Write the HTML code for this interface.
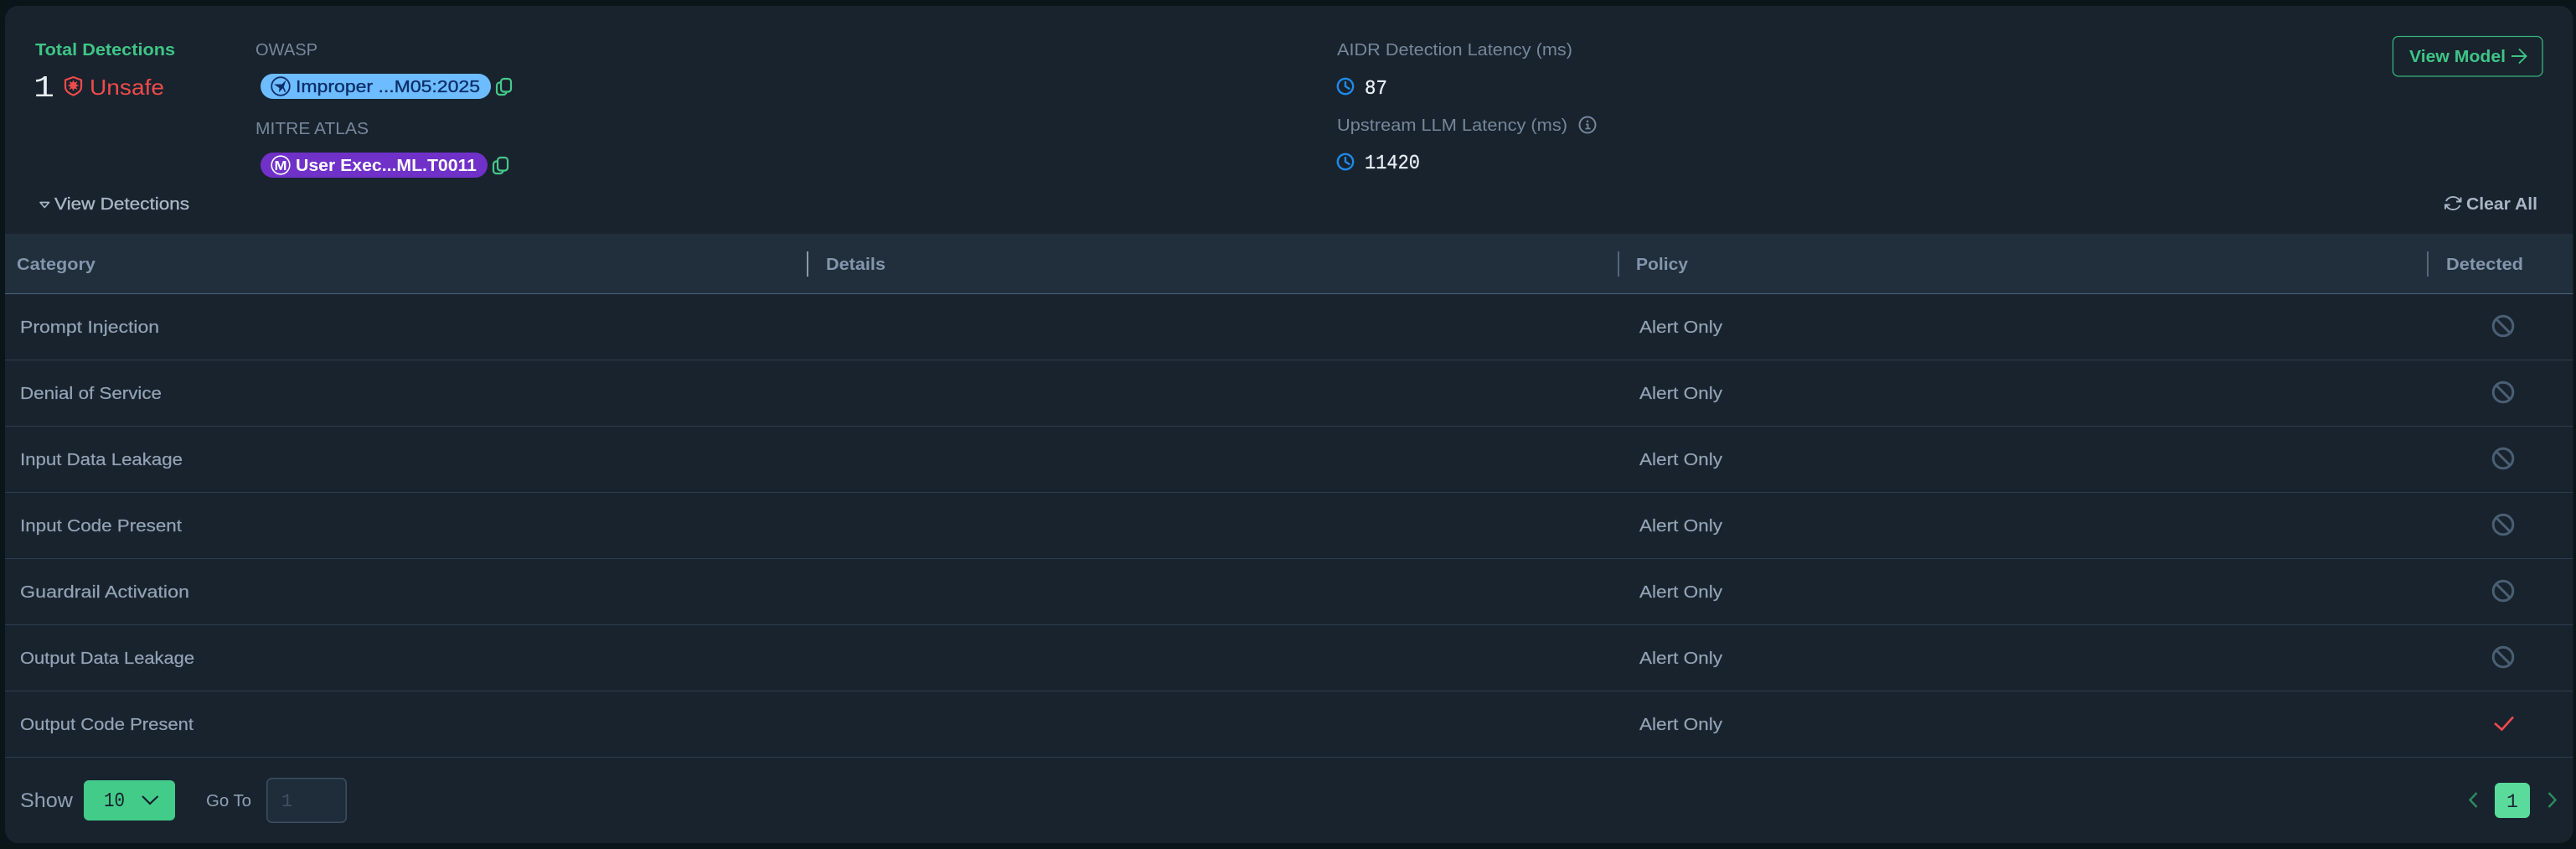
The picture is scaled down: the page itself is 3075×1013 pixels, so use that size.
<!DOCTYPE html>
<html lang="en"><head><meta charset="utf-8"><title>Detections</title>
<style>
html,body{margin:0;padding:0;width:3075px;height:1013px;overflow:hidden;background:#0a1519}
svg{display:block}
text{font-family:"Liberation Sans",sans-serif;font-size:20px}
.m{font-family:"Liberation Mono",monospace}
.b{font-weight:700}
.lab{fill:#76879a}
.row{fill:#93a3b5;stroke:#93a3b5;stroke-width:.2px}
.hd{fill:#8296ac;font-weight:700}
.pol{fill:#93a3b5;stroke:#93a3b5;stroke-width:.2px}
</style></head><body>
<svg width="3075" height="1013" viewBox="0 0 3075 1013" xmlns="http://www.w3.org/2000/svg">
<defs>
<g id="ban" fill="none" stroke="#4a5f73" stroke-width="3"><circle cx="0" cy="0" r="11.8"/><path d="M-8.3-8.3 8.3 8.3"/></g>
<g id="clk" fill="none" stroke="#1f8ae8" stroke-width="2.4"><circle cx="0" cy="0" r="9.2"/><path d="M0-5V0L4.5 2.8" stroke-linecap="round" stroke-linejoin="round"/></g>
<g id="cpy" fill="none" stroke="#46c98a" stroke-width="2.2" stroke-linejoin="round"><rect x="6" y="1" width="12" height="15.500" rx="3.500"/><path d="M6 5.500H4.500A3.500 3.500 0 0 0 1 9V16.500A3.500 3.500 0 0 0 4.500 20H9A3.500 3.500 0 0 0 12.500 16.500"/></g>
</defs>
<rect x="6" y="7" width="3065.5" height="999" rx="16" fill="#18232e"/>

<!-- Summary -->
<text x="42" y="66" class="b" fill="#3fc586" textLength="167" lengthAdjust="spacingAndGlyphs">Total Detections</text>
<text x="40" y="115" class="m" style="font-size:36px" fill="#e8edf2" textLength="25" lengthAdjust="spacingAndGlyphs">1</text>
<g transform="translate(77,91)" fill="none" stroke="#f04a4a" stroke-width="2.2" stroke-linejoin="round"><path d="M10.500 1 20 4.500V13C20 17.500 15.500 20.500 10.500 22.500 5.500 20.500 1 17.500 1 13V4.500Z"/><circle cx="10.500" cy="11" r="4.200" fill="#f04a4a" stroke="none"/><path d="M10.500 5V17M4.500 11H16.500M6.200 6.700 14.800 15.300M14.800 6.700 6.200 15.300" stroke-width="1.500"/></g>
<text x="107" y="113" style="font-size:26px" fill="#f04a4a" textLength="89" lengthAdjust="spacingAndGlyphs">Unsafe</text>

<text x="305" y="66" class="lab" textLength="74" lengthAdjust="spacingAndGlyphs">OWASP</text>
<rect x="311" y="88" width="275" height="30" rx="15" fill="#6dbcff"/>
<g transform="translate(335,103)"><circle r="10.800" fill="none" stroke="#0d2f68" stroke-width="1.800"/><path d="M-8-2.500H1.500L6.500-7.500 3.500 1.500-2 7-1.500 2Z" fill="#0d2f68"/><path d="M3 1 5.500 6.500" stroke="#0d2f68" stroke-width="1.600" fill="none"/></g>
<text x="353" y="110" fill="#0d2f68" style="stroke:#0d2f68;stroke-width:.35px" textLength="220" lengthAdjust="spacingAndGlyphs">Improper ...M05:2025</text>
<use href="#cpy" x="592" y="93"/>

<text x="305" y="160" class="lab" textLength="135" lengthAdjust="spacingAndGlyphs">MITRE ATLAS</text>
<rect x="311" y="182" width="271" height="30" rx="15" fill="#7031c9"/>
<circle cx="335" cy="197" r="10.800" fill="none" stroke="#fff" stroke-width="1.600"/>
<text x="327.500" y="203" class="b" fill="#fff" style="font-size:16px" textLength="15" lengthAdjust="spacingAndGlyphs">M</text>
<text x="353" y="204" class="b" fill="#fff" textLength="216" lengthAdjust="spacingAndGlyphs">User Exec...ML.T0011</text>
<use href="#cpy" x="588" y="187"/>

<path d="M48 241.500H58.500L53.250 247.500Z" fill="none" stroke="#a9b6c4" stroke-width="1.700" stroke-linejoin="round"/>
<text x="65" y="250" fill="#a9b6c4" style="stroke:#a9b6c4;stroke-width:.35px" textLength="161" lengthAdjust="spacingAndGlyphs">View Detections</text>

<text x="1596" y="66" class="lab" textLength="281" lengthAdjust="spacingAndGlyphs">AIDR Detection Latency (ms)</text>
<use href="#clk" x="1606" y="103"/>
<text x="1629" y="112" class="m" style="font-size:24px;stroke:#e8edf2;stroke-width:.3px" fill="#e8edf2" textLength="27" lengthAdjust="spacingAndGlyphs">87</text>
<text x="1596" y="156" class="lab" textLength="275" lengthAdjust="spacingAndGlyphs">Upstream LLM Latency (ms)</text>
<g transform="translate(1895,149)" fill="none" stroke="#76879a" stroke-width="2"><circle r="9.500"/><path d="M-2-.5H.5V4.500M-2.500 4.500H3.500" stroke-width="1.800"/><circle cx="0" cy="-4.200" r="1.300" fill="#76879a" stroke="none"/></g>
<use href="#clk" x="1606" y="193"/>
<text x="1629" y="201" class="m" style="font-size:24px;stroke:#e8edf2;stroke-width:.3px" fill="#e8edf2" textLength="66" lengthAdjust="spacingAndGlyphs">11420</text>

<rect x="2856.500" y="43.500" width="178.500" height="47.500" rx="6.500" fill="none" stroke="#38b578" stroke-width="1.300"/>
<text x="2876" y="74" class="b" fill="#3fc586" textLength="115" lengthAdjust="spacingAndGlyphs">View Model</text>
<path d="M2998 67H3015M3007 58.500 3015.500 67 3007 75.500" fill="none" stroke="#3fc586" stroke-width="1.900"/>

<g fill="none" stroke="#a9b6c4" stroke-width="1.900"><path d="M2920 240A9 8.500 0 0 1 2936.500 240M2936.500 245A9 8.500 0 0 1 2920 245"/><path d="M2932 240.500H2937.500V235.500M2924.500 244.500H2919V249.500"/></g>
<text x="2944" y="250" class="b" fill="#a9b6c4" textLength="85" lengthAdjust="spacingAndGlyphs">Clear All</text>

<!-- Table header -->
<rect x="6" y="279" width="3065.5" height="71" fill="#212e3b"/>
<rect x="6" y="350" width="3065.5" height="1" fill="#4a6580"/>
<text x="20" y="322" class="hd" textLength="94" lengthAdjust="spacingAndGlyphs">Category</text>
<rect x="963" y="300" width="2" height="30" fill="#8c9aaa"/>
<text x="986" y="322" class="hd" textLength="71" lengthAdjust="spacingAndGlyphs">Details</text>
<rect x="1931" y="300" width="2" height="30" fill="#54677a"/>
<text x="1953" y="322" class="hd" textLength="62" lengthAdjust="spacingAndGlyphs">Policy</text>
<rect x="2897" y="300" width="2" height="30" fill="#54677a"/>
<text x="2920" y="322" class="hd" textLength="92" lengthAdjust="spacingAndGlyphs">Detected</text>

<!-- Rows -->
<g fill="#2f3e4d">
<rect x="6" y="429" width="3065.5" height="1"/><rect x="6" y="508" width="3065.5" height="1"/><rect x="6" y="587" width="3065.5" height="1"/><rect x="6" y="666" width="3065.5" height="1"/><rect x="6" y="745" width="3065.5" height="1"/><rect x="6" y="824" width="3065.5" height="1"/><rect x="6" y="903" width="3065.5" height="1"/>
</g>
<text x="24" y="397" class="row" textLength="166" lengthAdjust="spacingAndGlyphs">Prompt Injection</text>
<text x="24" y="476" class="row" textLength="169" lengthAdjust="spacingAndGlyphs">Denial of Service</text>
<text x="24" y="555" class="row" textLength="194" lengthAdjust="spacingAndGlyphs">Input Data Leakage</text>
<text x="24" y="634" class="row" textLength="193" lengthAdjust="spacingAndGlyphs">Input Code Present</text>
<text x="24" y="713" class="row" textLength="202" lengthAdjust="spacingAndGlyphs">Guardrail Activation</text>
<text x="24" y="792" class="row" textLength="208" lengthAdjust="spacingAndGlyphs">Output Data Leakage</text>
<text x="24" y="871" class="row" textLength="207" lengthAdjust="spacingAndGlyphs">Output Code Present</text>

<text x="1957" y="397" class="pol" textLength="99" lengthAdjust="spacingAndGlyphs">Alert Only</text>
<text x="1957" y="476" class="pol" textLength="99" lengthAdjust="spacingAndGlyphs">Alert Only</text>
<text x="1957" y="555" class="pol" textLength="99" lengthAdjust="spacingAndGlyphs">Alert Only</text>
<text x="1957" y="634" class="pol" textLength="99" lengthAdjust="spacingAndGlyphs">Alert Only</text>
<text x="1957" y="713" class="pol" textLength="99" lengthAdjust="spacingAndGlyphs">Alert Only</text>
<text x="1957" y="792" class="pol" textLength="99" lengthAdjust="spacingAndGlyphs">Alert Only</text>
<text x="1957" y="871" class="pol" textLength="99" lengthAdjust="spacingAndGlyphs">Alert Only</text>

<use href="#ban" x="2988" y="389"/><use href="#ban" x="2988" y="468"/><use href="#ban" x="2988" y="547"/><use href="#ban" x="2988" y="626"/><use href="#ban" x="2988" y="705"/><use href="#ban" x="2988" y="784"/>
<path d="M2978 863 2986.500 870.500 3000 855.500" fill="none" stroke="#f04a4a" stroke-width="2.600"/>

<!-- Footer -->
<text x="24" y="963" style="font-size:24px" fill="#8fa0b2" textLength="63" lengthAdjust="spacingAndGlyphs">Show</text>
<rect x="100" y="931" width="109" height="48" rx="6" fill="#43cc89"/>
<text x="124" y="962" class="m" style="font-size:24px" fill="#14202b" textLength="25" lengthAdjust="spacingAndGlyphs">10</text>
<path d="M170 950 179 959 188.500 950" fill="none" stroke="#14202b" stroke-width="2.200"/>
<text x="246" y="962" fill="#8fa0b2" textLength="54" lengthAdjust="spacingAndGlyphs">Go To</text>
<rect x="318.750" y="928.750" width="94.500" height="52.500" rx="6" fill="#1f2c39" stroke="#3b4f63" stroke-width="1.500"/>
<text x="336" y="962" class="m" style="font-size:22px" fill="#3f5165" textLength="13" lengthAdjust="spacingAndGlyphs">1</text>
<path d="M2956.500 946 2948.500 954.500 2956.500 963" fill="none" stroke="#2f8a60" stroke-width="2.400"/>
<rect x="2978" y="934" width="42" height="42" rx="6" fill="#5adb9b"/>
<text x="2992" y="963" class="m" style="font-size:23px" fill="#1c2a35" textLength="14" lengthAdjust="spacingAndGlyphs">1</text>
<path d="M3042.500 946 3050.500 954.500 3042.500 963" fill="none" stroke="#2f8a60" stroke-width="2.400"/>
</svg>
</body></html>
